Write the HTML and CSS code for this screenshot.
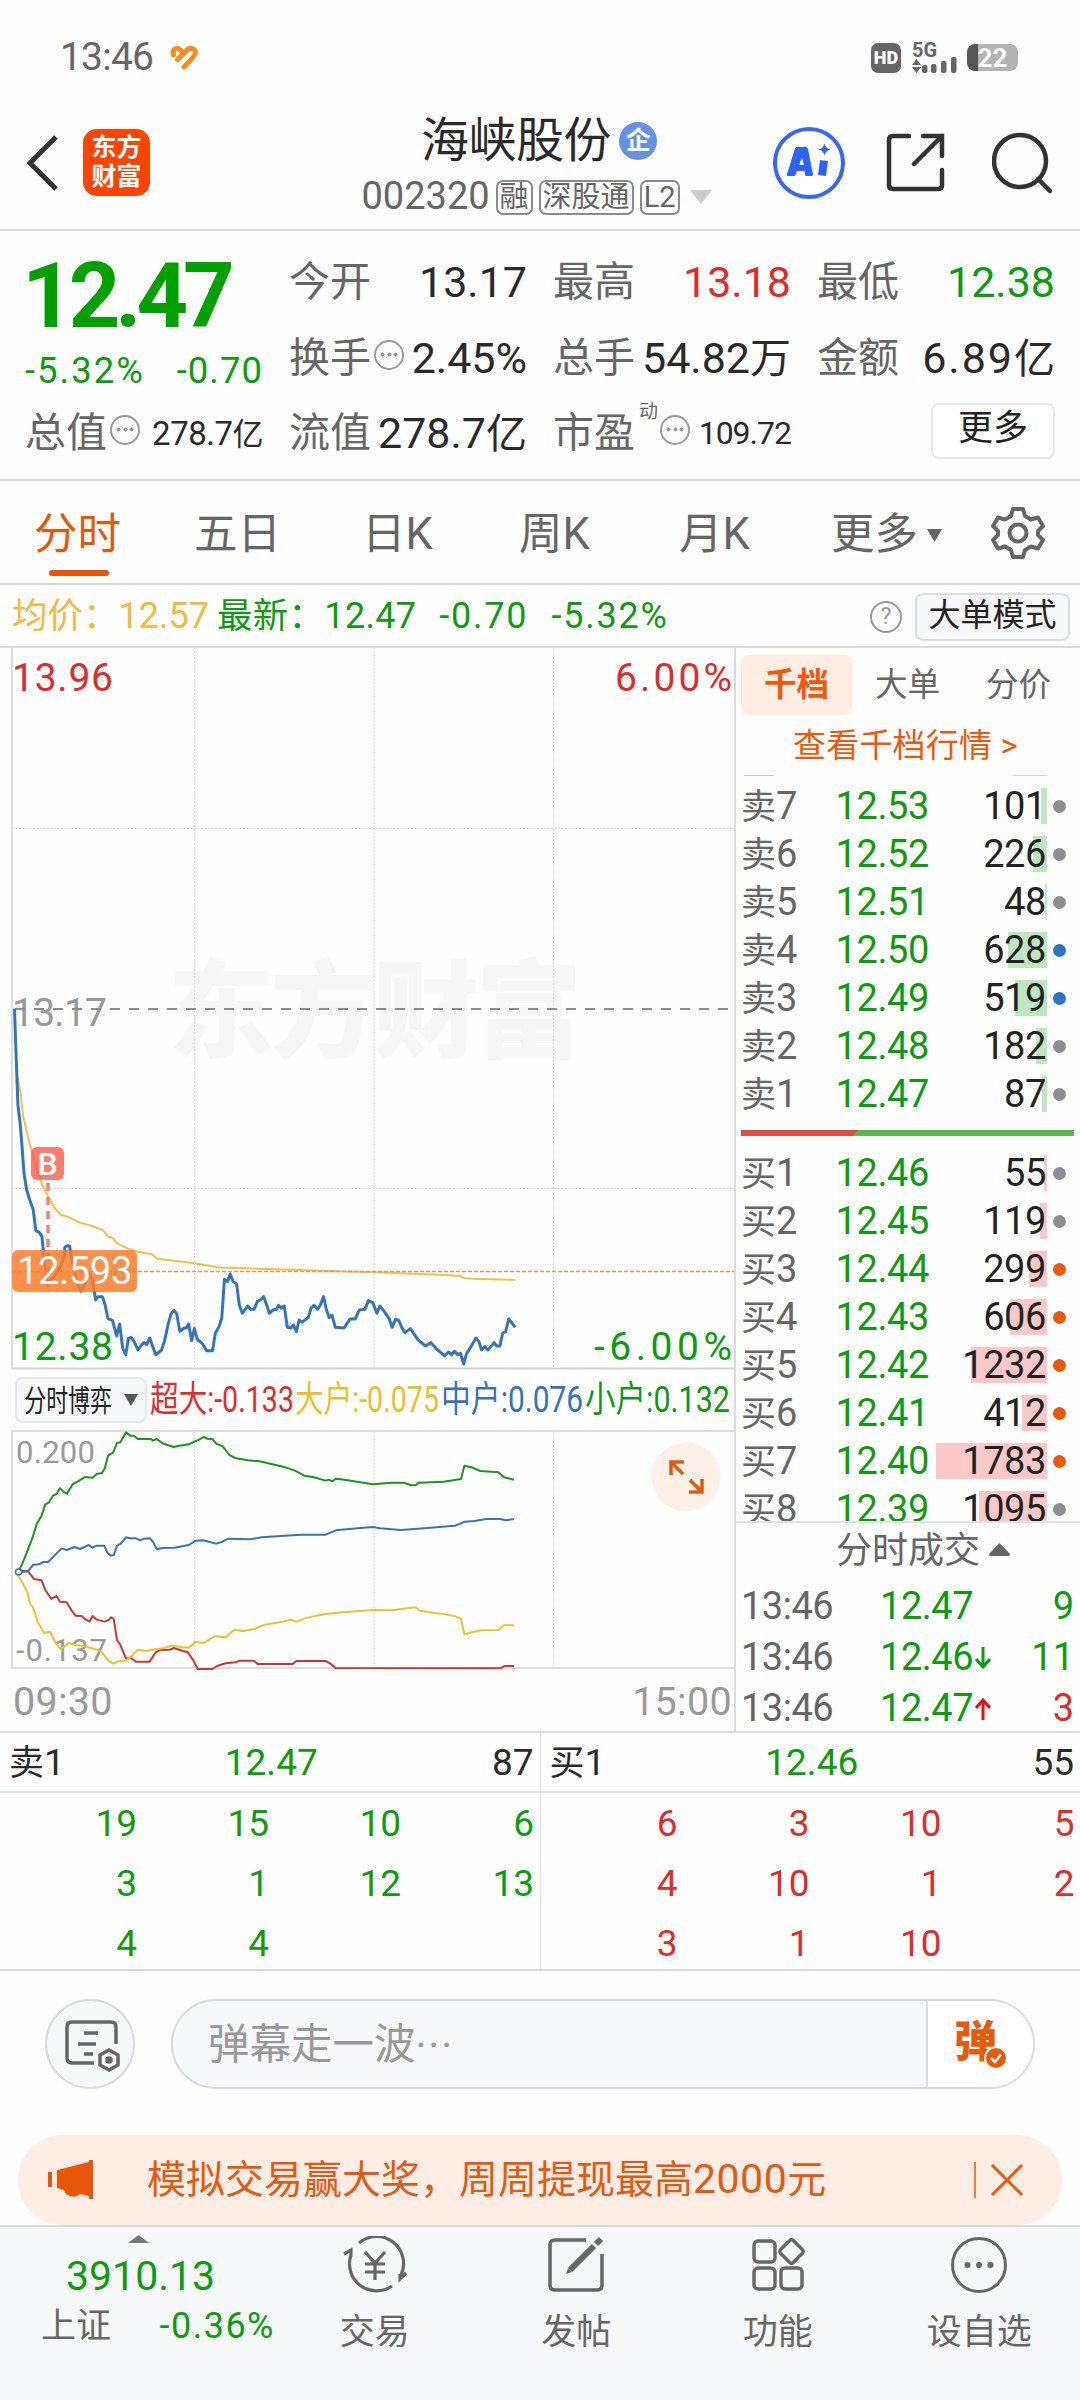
FILE: index.html
```html
<!DOCTYPE html>
<html lang="zh-CN">
<head>
    <meta charset="UTF-8">
    <meta name="viewport" content="width=device-width, initial-scale=1.0">
    <title>海峡股份 002320</title>
    <link rel="stylesheet" href="styles.css">
</head>
<body>
    <div class="status-bar">
        <span class="time">13:46</span>
        <svg class="heart" width="28" height="25" viewBox="0 0 28 25" fill="none" stroke="#ff8a1e" stroke-width="5" stroke-linecap="round">
            <path d="M3.500 10C2 5 6 2 9 4L14 8M7.500 14.500L16 6C20 1 27 4 25 9C24 12 18 18 14 22"/>
        </svg>
        <div class="status-icons">
            <span class="hd">HD</span>
            <svg width="46" height="32" viewBox="0 0 46 32" fill="#666">
                <text class="net" x="0" y="15" textLength="25" lengthAdjust="spacingAndGlyphs">5G</text>
                <path d="M0 23l4.500-6 4.500 6zM0 25l4.500 6 4.500-6z"/>
                <rect x="10" y="23" width="5.500" height="8" rx="2"/>
                <rect x="19" y="22" width="5.500" height="9" rx="2"/>
                <rect x="29" y="19" width="5.500" height="12" rx="2"/>
                <rect x="39" y="15" width="5.500" height="16" rx="2"/>
            </svg>
            <span class="battery">22</span>
        </div>
    </div>

    <header class="header">
        <svg class="back" width="32" height="56" viewBox="0 0 32 56" fill="none" stroke="#333" stroke-width="5">
            <path d="M30 2L4 28L30 54"/>
        </svg>
        <div class="logo">东方<br>财富</div>
        <div class="stock">
            <div class="stock-name">海峡股份<span class="corp">企</span></div>
            <div class="stock-code">
                <span>002320</span><span class="tag">融</span><span class="tag">深股通</span><span class="tag">L2</span>
                <svg width="22" height="14" viewBox="0 0 22 14"><path d="M0 0h22L11 14z" fill="#ccc"/></svg>
            </div>
        </div>
        <svg class="ai" width="72" height="72" viewBox="0 0 72 72">
            <circle cx="36" cy="36" r="34" fill="#fff" stroke="#3a66f5" stroke-width="4"/>
            <path d="M23.500 20H33Q34.500 20 35 22L40 47Q40 49 38.500 49H33Q32 49 32 47L31.500 44H24L22.500 48Q22 49 21 49H15Q13 49 14 47L22 21.500Q22.500 20 23.500 20ZM29 31L26 38H31Z" fill="#2f62f6"/>
            <path d="M51 33.500L49 48.500" stroke="#2f62f6" stroke-width="8"/>
            <path d="M51.500 16.500q1 5 6 6q-5 1-6 6q-1-5-6-6q5-1 6-6z" fill="#2f62f6"/>
        </svg>
        <svg class="share" width="60" height="60" viewBox="0 0 60 60" fill="none" stroke="#333" stroke-width="4.500" stroke-linecap="round">
            <path d="M23 3H7Q3 3 3 7V52Q3 56 7 56H52Q56 56 56 52V37M37 3H56V23M56 3L28 31"/>
        </svg>
        <svg class="search" width="60" height="62" viewBox="0 0 60 62" fill="none" stroke="#333" stroke-width="4.500" stroke-linecap="round">
            <circle cx="28" cy="29" r="26"/><path d="M46 47L58 59"/>
        </svg>
    </header>

    <section class="quote">
        <div class="price">12.47</div>
        <div class="metric"><label>今开</label><b>13.17</b></div>
        <div class="metric"><label>最高</label><b class="red">13.18</b></div>
        <div class="metric"><label>最低</label><b class="green">12.38</b></div>

        <div class="change"><span>-5.32%</span><span>-0.70</span></div>
        <div class="metric"><label>换手</label><i class="dots"></i><b>2.45%</b></div>
        <div class="metric"><label>总手</label><b>54.82<em>万</em></b></div>
        <div class="metric wide"><label>金额</label><b>6.89<em>亿</em></b></div>

        <div class="metric small"><label>总值</label><i class="dots"></i><b>278.7<em>亿</em></b></div>
        <div class="metric"><label>流值</label><b>278.7<em>亿</em></b></div>
        <div class="metric small"><label>市盈</label><sup>动</sup><i class="dots"></i><b class="ratio-value">109.72</b></div>
        <button class="more-btn">更多</button>
    </section>

    <nav class="tabs">
        <a class="active">分时</a>
        <a>五日</a>
        <a>日K</a>
        <a>周K</a>
        <a>月K</a>
        <a class="tab-more">更多<svg width="15" height="13" viewBox="0 0 15 13"><path d="M0 0h15L7.500 13z" fill="#666"/></svg></a>
        <svg class="gear" width="54" height="54" viewBox="0 0 54 54" fill="none" stroke="#666" stroke-width="4">
            <path d="M22 3H32L34 10L40 13.500L47 11.500L52 20L47 25V29L52 34L47 42.500L40 40.500L34 44L32 51H22L20 44L14 40.500L7 42.500L2 34L7 29V25L2 20L7 11.500L14 13.500L20 10Z" stroke-linejoin="round"/>
            <circle cx="27" cy="27" r="8.500"/>
        </svg>
    </nav>

    <div class="summary">
        <span class="avg"><em>均价：</em>12.57</span>
        <span class="last"><em>最新：</em>12.47</span>
        <span class="diff">-0.70</span>
        <span class="diff">-5.32%</span>
        <span class="help">?</span>
        <button class="mode-btn">大单模式</button>
    </div>

    <main class="main">
        <div class="charts">
            <div class="price-chart">
                <svg class="plot" width="735" height="723" viewBox="0 0 735 723" fill="none">
                    <text class="watermark" x="168" y="402" textLength="414">东方财富</text>
                    <path d="M12 181.500H734M12 541.500H734M194.500 0V722M374 0V722M553.500 0V722" stroke="#d8d8d8" stroke-dasharray="2 1.500"/>
                    <path d="M12 0V722" stroke="#ddd" stroke-width="2"/>
                    <path d="M12 721.500H734" stroke="#d4d4d4" stroke-width="2"/>
                    <text class="axis" x="12" y="379" fill="#999" textLength="95">13.17</text>
                    <path d="M15 362H733" stroke="#8c8c8c" stroke-width="2" stroke-dasharray="10 9"/>
                    <g transform="translate(0 353) scale(.338 .3333)" stroke-linejoin="round">
                        <polyline vector-effect="non-scaling-stroke" stroke="#f0bf4c" stroke-width="2" points="53,235 61,280 68,345 80,400 92,445 110,510 125,555 143,590 160,622 180,645 200,650 235,668 265,676 304,690 320,710 335,715 345,729 378,746 410,756 450,763 465,776 520,783 575,790 655,803 760,806 860,809 1000,814 1150,818 1300,824 1360,828 1375,835 1420,837 1524,840"/>
                        <polyline vector-effect="non-scaling-stroke" stroke="#3574b8" stroke-width="3" points="43,26 46,120 53,315 60,375 66,450 71,520 79,570 88,600 98,628 106,692 116,697 124,710 130,770 140,850 160,830 178,800 190,770 192,742 198,737 206,738 210,765 218,800 228,850 240,874 252,850 262,820 274,842 283,900 290,890 303,890 311,915 319,955 333,962 345,1008 354,972 363,1045 372,1064 380,1015 388,1012 397,1025 408,1050 420,1034 426,1028 434,1034 443,1014 452,1040 461,1064 478,1050 487,1022 497,975 506,942 515,931 523,942 532,994 545,984 551,984 558,972 567,1022 575,986 584,1018 598,1030 611,1052 629,1052 637,1000 648,980 656,955 664,838 673,845 681,822 690,845 700,852 708,915 717,940 733,918 741,928 752,928 761,905 770,900 780,890 789,915 797,940 808,930 818,928 824,916 832,925 841,918 850,982 861,984 868,975 877,995 885,960 894,966 912,953 920,925 929,916 939,928 948,915 957,890 966,930 974,953 982,945 992,982 1018,984 1027,970 1036,957 1051,957 1063,930 1080,928 1090,902 1103,908 1115,940 1124,918 1137,935 1151,955 1160,982 1171,957 1180,962 1190,985 1198,998 1214,986 1237,1020 1259,1038 1275,1028 1290,1045 1315,1068 1328,1056 1336,1064 1345,1054 1354,1064 1362,1060 1372,1092 1380,1062 1397,1034 1408,1014 1417,1025 1425,1050 1434,1040 1444,1050 1462,1028 1469,1038 1479,1038 1487,1000 1496,995 1505,957 1512,965 1524,982"/>
                    </g>
                    <path d="M12 624.500H734" stroke="#d89a66" stroke-width="1.500" stroke-dasharray="4 2"/>
                    <path d="M48 536V640" stroke="#ee8577" stroke-width="3.500" stroke-dasharray="8 6"/>
                    <text class="axis" x="12" y="44" fill="#dd2c2c" textLength="101">13.96</text>
                    <text class="axis" x="615" y="44" fill="#dd2c2c" textLength="117">6.00%</text>
                    <text class="axis" x="12" y="713" fill="#0f9a10" textLength="101">12.38</text>
                    <text class="axis" x="594" y="713" fill="#0f9a10" textLength="138">-6.00%</text>
                </svg>
                <span class="buy-mark">B</span>
                <span class="price-mark">12.593</span>
            </div>

            <div class="legend">
                <button class="game-btn"><span>分时博弈</span><svg width="14" height="12" viewBox="0 0 14 12"><path d="M0 0h14L7 12z" fill="#555"/></svg></button>
                <svg class="legend-text" width="584" height="62" viewBox="0 0 584 62">
                    <text x="0" y="43" fill="#d92f2f" textLength="144" lengthAdjust="spacingAndGlyphs">超大:-0.133</text>
                    <text x="145" y="43" fill="#eac02a" textLength="144" lengthAdjust="spacingAndGlyphs">大户:-0.075</text>
                    <text x="291" y="43" fill="#3973b0" textLength="142" lengthAdjust="spacingAndGlyphs">中户:0.076</text>
                    <text x="435" y="43" fill="#149514" textLength="145" lengthAdjust="spacingAndGlyphs">小户:0.132</text>
                </svg>
            </div>

            <div class="flow-chart">
                <svg class="plot" width="735" height="240" viewBox="0 0 735 240" fill="none">
                    <path d="M194.500 1V238M374 1V238M553.500 1V238" stroke="#d8d8d8" stroke-dasharray="2 1.500"/>
                    <path d="M734 1H12V238H734" stroke="#ddd" stroke-width="2"/>
                    <text class="axis-small" x="16" y="33" textLength="79">0.200</text>
                    <text class="axis-small" x="16" y="231" textLength="91">-0.137</text>
                    <g transform="translate(0 -71) scale(.4719 .3333)" stroke-width="2" stroke-linejoin="round">
                        <polyline vector-effect="non-scaling-stroke" stroke="#cf3434" points="38,632 60,638 72,660 88,664 96,693 105,712 109,720 120,711 127,728 141,730 152,755 160,770 173,771 182,782 190,788 196,771 205,782 221,788 228,785 236,775 241,780 248,843 254,855 267,898 278,898 288,908 317,908 330,880 340,873 360,872 368,867 388,876 398,880 410,905 419,930 450,930 460,921 478,913 500,910 508,905 538,905 546,915 620,915 628,906 690,906 700,914 711,927 1060,928 1070,921 1089,921"/>
                        <polyline vector-effect="non-scaling-stroke" stroke="#e9c22e" points="38,648 47,670 58,700 64,735 70,745 80,790 94,822 106,818 117,850 128,870 140,860 145,852 160,858 180,862 205,872 216,880 230,906 240,914 250,907 267,905 280,890 292,872 310,876 330,871 345,868 365,860 385,865 400,866 415,849 432,852 455,832 478,835 497,812 515,816 540,810 560,797 600,788 615,782 628,788 650,776 690,765 715,761 790,753 830,754 880,745 890,755 920,762 935,764 965,772 977,780 984,826 1000,820 1020,814 1056,813 1068,799 1089,799"/>
                        <polyline vector-effect="non-scaling-stroke" stroke="#3973b3" points="38,645 48,638 60,636 70,618 82,616 92,609 102,609 112,595 130,569 142,573 158,564 170,570 188,558 196,566 205,560 221,560 228,582 235,590 241,588 248,560 255,555 267,535 275,538 288,538 297,544 305,539 318,538 325,550 332,571 345,567 370,566 400,558 415,545 430,544 458,554 470,549 484,539 530,541 555,535 620,529 640,527 690,527 712,514 740,510 790,504 805,508 850,513 900,508 950,502 965,500 985,488 1005,486 1030,480 1060,480 1072,484 1089,480"/>
                        <polyline vector-effect="non-scaling-stroke" stroke="#1c931c" points="38,640 47,615 57,580 68,540 78,495 88,470 96,436 104,430 112,410 120,405 127,388 134,398 142,404 154,376 168,365 180,354 196,356 205,345 216,342 222,328 229,290 240,280 248,252 255,250 267,220 276,230 284,230 292,240 320,240 324,245 332,240 345,253 355,258 368,264 380,260 400,256 412,248 422,242 432,234 441,240 450,240 458,254 472,262 486,288 500,298 525,304 550,307 600,323 625,335 645,350 665,355 690,365 697,362 704,367 712,359 730,362 790,376 830,371 855,371 870,378 880,379 888,371 940,368 977,360 984,320 1000,325 1018,336 1056,340 1068,355 1089,362"/>
                    </g>
                    <circle cx="18.500" cy="142" r="3" fill="#fff" stroke="#3973b3" stroke-width="1.500"/>
                </svg>
                <svg class="expand" width="70" height="70" viewBox="0 0 70 70">
                    <circle cx="35" cy="35" r="34.500" fill="#fdf0e8"/>
                    <path d="M33 20H20V33M20 20L32 32M51 37V50H38M51 50L39 38" fill="none" stroke="#dc5c12" stroke-width="3.500"/>
                </svg>
            </div>

            <div class="time-axis"><span>09:30</span><span>15:00</span></div>
        </div>

        <aside class="book">
            <div class="book-tabs"><a class="active">千档</a><a>大单</a><a>分价</a></div>
            <a class="book-link">查看千档行情 &gt;</a>
            <div class="levels">
                <i class="cut-label"></i><i class="cut-bar"></i>
                <div class="level sell"><label><em>卖</em>7</label><span>12.53</span><b><u style="width:6px"></u>101</b><i></i></div>
                <div class="level sell"><label><em>卖</em>6</label><span>12.52</span><b><u style="width:14px"></u>226</b><i></i></div>
                <div class="level sell"><label><em>卖</em>5</label><span>12.51</span><b><u style="width:2px"></u>48</b><i></i></div>
                <div class="level sell"><label><em>卖</em>4</label><span>12.50</span><b><u style="width:39px"></u>628</b><i class="blue-dot"></i></div>
                <div class="level sell"><label><em>卖</em>3</label><span>12.49</span><b><u style="width:32px"></u>519</b><i class="blue-dot"></i></div>
                <div class="level sell"><label><em>卖</em>2</label><span>12.48</span><b><u style="width:11px"></u>182</b><i></i></div>
                <div class="level sell"><label><em>卖</em>1</label><span>12.47</span><b><u style="width:5px"></u>87</b><i></i></div>
                <div class="ratio"></div>
                <div class="level buy"><label><em>买</em>1</label><span>12.46</span><b><u style="width:3px"></u>55</b><i></i></div>
                <div class="level buy"><label><em>买</em>2</label><span>12.45</span><b><u style="width:7px"></u>119</b><i></i></div>
                <div class="level buy"><label><em>买</em>3</label><span>12.44</span><b><u style="width:18px"></u>299</b><i class="orange-dot"></i></div>
                <div class="level buy"><label><em>买</em>4</label><span>12.43</span><b><u style="width:37px"></u>606</b><i class="orange-dot"></i></div>
                <div class="level buy"><label><em>买</em>5</label><span>12.42</span><b><u style="width:76px"></u>1232</b><i class="orange-dot"></i></div>
                <div class="level buy"><label><em>买</em>6</label><span>12.41</span><b><u style="width:25px"></u>412</b><i class="orange-dot"></i></div>
                <div class="level buy"><label><em>买</em>7</label><span>12.40</span><b><u style="width:111px"></u>1783</b><i class="orange-dot"></i></div>
                <div class="level buy"><label><em>买</em>8</label><span>12.39</span><b><u style="width:68px"></u>1095</b><i></i></div>
            </div>
            <div class="deals-title">分时成交<svg width="21" height="13" viewBox="0 0 21 13"><path d="M10.500 0L21 11Q21 13 19 13H2Q0 13 0 11z" fill="#666"/></svg></div>
            <div class="deal"><span>13:46</span><b>12.47</b><i></i><em class="green">9</em></div>
            <div class="deal"><span>13:46</span><b>12.46</b><i><svg width="16" height="22" viewBox="0 0 16 22" fill="none" stroke="#0f9a10" stroke-width="3"><path d="M8 0V20M1 12L8 20L15 12"/></svg></i><em class="green">11</em></div>
            <div class="deal"><span>13:46</span><b>12.47</b><i><svg width="16" height="22" viewBox="0 0 16 22" fill="none" stroke="#dd1515" stroke-width="3"><path d="M8 22V2M1 10L8 2L15 10"/></svg></i><em class="red">3</em></div>
        </aside>
    </main>

    <section class="queues">
        <div class="queue">
            <div class="queue-head"><span><em>卖</em>1</span><b>12.47</b><span>87</span></div>
            <div class="queue-grid green">
                <span>19</span><span>15</span><span>10</span><span>6</span>
                <span>3</span><span>1</span><span>12</span><span>13</span>
                <span>4</span><span>4</span>
            </div>
        </div>
        <div class="queue">
            <div class="queue-head"><span><em>买</em>1</span><b>12.46</b><span>55</span></div>
            <div class="queue-grid red">
                <span>6</span><span>3</span><span>10</span><span>5</span>
                <span>4</span><span>10</span><span>1</span><span>2</span>
                <span>3</span><span>1</span><span>10</span>
            </div>
        </div>
    </section>

    <div class="comment">
        <div class="comment-set">
            <svg width="56" height="52" viewBox="0 0 56 52" fill="none" stroke="#666" stroke-width="3.500">
                <path d="M29 43H7Q2 43 2 38V7Q2 2 7 2H46Q51 2 51 7V24M19 13H33M13 24H31M19 34H28"/>
                <path d="M44 30L53 35V45L44 50L35 45V35Z"/><circle cx="44" cy="40" r="2" fill="#666"/>
            </svg>
        </div>
        <div class="comment-box">
            <span class="placeholder">弹幕走一波<i>···</i></span>
            <div class="danmu">弹
                <svg width="24" height="24" viewBox="0 0 24 24"><circle cx="12" cy="12" r="11" fill="#e8590c" stroke="#fff" stroke-width="2"/><path d="M7 12L11 16L17 8.500" fill="none" stroke="#fff" stroke-width="2.500"/></svg>
            </div>
        </div>
    </div>

    <div class="banner">
        <svg width="46" height="40" viewBox="0 0 46 40" fill="#e85608"><path d="M0 12h4v15H0zM9 10L41 2V0H45V39H41V36L32 34Q28 38 22 36Q17 35 16 30L9 28z"/></svg>
        <span class="banner-text">模拟交易赢大奖，周周提现最高<em>2000</em>元</span>
        <svg class="banner-close" width="50" height="38" viewBox="0 0 50 38" fill="none" stroke="#e8590c"><path d="M1 1V37" stroke-width="1.500"/><path d="M18 4L48 34M48 4L18 34" stroke-width="3"/></svg>
    </div>

    <footer class="bottom-nav">
        <div class="index">
            <svg width="21" height="8" viewBox="0 0 21 8"><path d="M10.500 0L21 8H0z" fill="#77777c"/></svg>
            <div class="index-value">3910.13</div>
            <div class="index-row"><span>上证</span><b>-0.36%</b></div>
        </div>
        <div class="nav-item">
            <svg width="66" height="58" viewBox="0 0 66 58" fill="none" stroke="#666" stroke-width="3.200">
                <path d="M17 7A27 27 0 0 1 59 39M64 37L58 43V38M2 18L9 14V19A27 27 0 0 0 50 50"/>
                <path d="M23 16L33 27L43 16M23 28H43M23 36H43M33 27V44"/>
            </svg>
            <span>交易</span>
        </div>
        <div class="nav-item">
            <svg width="56" height="58" viewBox="0 0 56 58" fill="none" stroke="#666" stroke-width="3.500">
                <path d="M38 4H7Q2 4 2 9V49Q2 54 7 54H49Q54 54 54 49V18"/>
                <path d="M22 34L46 10" stroke-width="6"/><path d="M48 8L53 3" stroke-width="6"/><path d="M20 32L24 36L18 38z" fill="#666" stroke="none"/>
            </svg>
            <span>发帖</span>
        </div>
        <div class="nav-item">
            <svg width="54" height="58" viewBox="0 0 54 58" fill="none" stroke="#666" stroke-width="3.400">
                <rect x="3" y="5" width="21" height="21" rx="4"/><rect x="3" y="32" width="21" height="21" rx="4"/><rect x="30" y="32" width="21" height="21" rx="4"/>
                <rect x="31.500" y="6.500" width="18" height="18" rx="2.500" transform="rotate(45 40.500 15.500)"/>
            </svg>
            <span>功能</span>
        </div>
        <div class="nav-item">
            <svg width="58" height="58" viewBox="0 0 58 58" fill="#666">
                <circle cx="29" cy="29" r="26.500" fill="none" stroke="#666" stroke-width="3"/>
                <circle cx="17.500" cy="29" r="3"/><circle cx="29" cy="29" r="3"/><circle cx="40.500" cy="29" r="3"/>
            </svg>
            <span>设自选</span>
        </div>
    </footer>
</body>
</html>
```
FILE: styles.css
```css
* {
    box-sizing: border-box;
}

body {
    margin: 0;
    width: 1080px;
    height: 2400px;
    overflow: hidden;
    background-color: #fefefe;
    color: #2a2a2a;
    font-family: Roboto, "Noto Sans CJK SC", sans-serif;
    font-size: 37px;
    line-height: 1.2;
}

svg {
    display: block;
    flex: none;
}

b, em, i {
    font-weight: normal;
    font-style: normal;
}

button {
    padding: 0;
    font-family: inherit;
    color: #222;
}

.red {
    color: #dd2c2c;
}

.green {
    color: #0f9a10;
}

/* status bar */
.status-bar {
    display: flex;
    align-items: center;
    height: 96px;
    padding: 19px 62px 0 60px;
    color: #666;
}

.time {
    font-size: 39px;
    width: 110px;
    letter-spacing: -0.8px;
}

.status-icons {
    display: flex;
    align-items: center;
    margin-left: auto;
    gap: 11px;
}

.hd {
    width: 30px;
    height: 30px;
    border-radius: 7px;
    background-color: #666;
    color: #fff;
    font-size: 18px;
    font-weight: 900;
    line-height: 30px;
    text-align: center;
}

.net {
    font-size: 20px;
    font-weight: bold;
}

.battery {
    width: 51px;
    height: 27px;
    margin-left: -2px;
    border-radius: 8px;
    background: linear-gradient(to right, #555 11px, #b3b3b3 11px);
    box-shadow: 3px 0 0 -7px #b3b3b3;
    color: #fff;
    font-size: 26px;
    font-weight: bold;
    line-height: 28px;
    text-align: center;
}

/* header */
.header {
    display: flex;
    align-items: center;
    height: 133px;
    padding: 0 28px 0 26px;
}

.logo {
    width: 67px;
    height: 67px;
    margin-left: 25px;
    padding-top: 4px;
    border-radius: 14px;
    background-color: #fd4402;
    color: #fff;
    font-size: 25px;
    font-weight: bold;
    line-height: 29px;
    text-align: center;
}

.stock {
    width: 380px;
    margin-left: 200px;
    padding-top: 9px;
}

.stock-name {
    display: flex;
    align-items: center;
    justify-content: center;
    height: 60px;
    padding-right: 2px;
    font-size: 48px;
    letter-spacing: -0.500px;
}

.corp {
    width: 38px;
    height: 38px;
    margin-left: 8px;
    border-radius: 50%;
    background-color: #6391e6;
    color: #fff;
    font-size: 25px;
    font-weight: bold;
    line-height: 37px;
    text-align: center;
}

.stock-code {
    display: flex;
    align-items: center;
    justify-content: center;
    height: 52px;
    padding-right: 7px;
    gap: 6px;
    color: #666;
    font-size: 38px;
}

.stock-code svg {
    margin-left: 4px;
}

.tag {
    height: 35px;
    padding: 0 2px;
    border: 2px solid #8a8a8a;
    border-radius: 7px;
    font-size: 29px;
    line-height: 31px;
}

.ai {
    margin-left: 43px;
}

.share {
    margin-left: 41px;
}

.search {
    margin-left: auto;
}

/* quote */
.quote {
    display: grid;
    grid-template-columns: repeat(4, 238px);
    grid-template-rows: 76px 75px 75px;
    column-gap: 26px;
    height: 252px;
    padding: 14px 25px 0;
    border-top: 2px solid #dadada;
    border-bottom: 2px solid #dadada;
}

.price {
    margin-left: -3px;
    padding-top: 5px;
    color: #00a000;
    font-size: 90px;
    font-weight: bold;
    letter-spacing: -5px;
    line-height: 94px;
}

.change {
    display: flex;
    justify-content: space-between;
    padding-top: 28px;
    color: #0f9a10;
    font-size: 36.500px;
    letter-spacing: 2px;
}

.change span:last-child {
    letter-spacing: 1px;
}

.metric {
    display: flex;
    align-items: center;
}

.metric label {
    color: #666;
    font-size: 41px;
}

.metric b {
    margin-left: auto;
    font-size: 43px;
}

.metric em {
    font-size: 41px;
}

.metric.wide b {
    letter-spacing: 2px;
    margin-right: -2px;
}

.metric.small b {
    font-size: 33px;
    letter-spacing: -0.500px;
}

.metric.small em {
    font-size: 31px;
}

.metric.small .ratio-value {
    font-size: 32px;
    letter-spacing: -1px;
}

.metric sup {
    align-self: flex-start;
    margin: 5px 0 0 4px;
    font-size: 19px;
    line-height: 1.2;
    color: #666;
}

.dots {
    width: 30px;
    height: 30px;
    margin: -8px 0 0 3px;
    border: 2px solid #999;
    border-radius: 50%;
    background: radial-gradient(circle, #999 1.800px, transparent 2.200px) center / 7px 7px no-repeat,
        radial-gradient(circle, #999 1.800px, transparent 2.200px) 3px center / 7px 7px no-repeat,
        radial-gradient(circle, #999 1.800px, transparent 2.200px) 16px center / 7px 7px no-repeat;
}

.metric.small sup + .dots {
    margin-left: 2px;
}

.more-btn {
    justify-self: end;
    align-self: center;
    width: 124px;
    height: 56px;
    margin-top: -6px;
    border: 2px solid #e8e8e8;
    border-radius: 8px;
    background-color: #fff;
    font-size: 35px;
    line-height: 46px;
    padding-bottom: 4px;
}

/* period tabs */
.tabs {
    display: grid;
    grid-template-columns: 160px 168px 157px 160px 152px 1fr 54px;
    align-items: center;
    height: 102px;
    padding: 2px 35px 0 34px;
    color: #666;
    font-size: 43.500px;
}

.tabs a {
    position: relative;
    padding-top: 4px;
}

.tabs .active {
    color: #e05a0e;
}

.tabs .active::after {
    content: "";
    position: absolute;
    left: 15px;
    bottom: -15px;
    width: 60px;
    height: 6px;
    border-radius: 3px;
    background-color: #e85608;
}

.tabs .tab-more {
    display: flex;
    align-items: center;
    gap: 9px;
}

/* summary line */
.summary {
    display: flex;
    align-items: center;
    height: 65px;
    padding: 2px 10px 0 12px;
    border-top: 2px solid #dadada;
    border-bottom: 2px solid #dadada;
    color: #0f9a10;
    font-size: 36px;
}

.summary em {
    font-size: 35.500px;
}

.summary .avg {
    color: #f0b942;
}

.last {
    margin-left: 8px;
    letter-spacing: 0.300px;
}

.diff {
    margin-left: 23px;
    letter-spacing: 1.800px;
}

.help {
    width: 32px;
    height: 32px;
    margin-left: auto;
    margin-right: 13px;
    border: 2.500px solid #999;
    border-radius: 50%;
    color: #999;
    font-size: 23px;
    line-height: 28px;
    text-align: center;
}

.mode-btn {
    width: 155px;
    height: 48px;
    padding-bottom: 4px;
    border: 2px solid #dcdde0;
    border-radius: 8px;
    background-color: #f6f7f9;
    font-size: 32px;
    line-height: 40px;
}

/* charts */
.main {
    display: flex;
    height: 1083px;
}

.charts {
    width: 736px;
    border-right: 2px solid #dadada;
}

.price-chart {
    position: relative;
    height: 722px;
}

.price-chart .plot {
    margin-top: -1px;
}

.watermark {
    fill: #f6f6f6;
    font-size: 106px;
    font-weight: 900;
}

.axis {
    font-size: 39px;
}

.axis-small {
    fill: #999;
    font-size: 31px;
}

.buy-mark {
    position: absolute;
    left: 31px;
    top: 500px;
    width: 33px;
    height: 33px;
    border-radius: 6px;
    background-color: rgba(250, 92, 75, 0.800);
    color: #fff;
    font-size: 32px;
    font-weight: 500;
    line-height: 34px;
    text-align: center;
}

.price-mark {
    position: absolute;
    left: 12px;
    top: 603px;
    width: 125px;
    height: 42px;
    border-radius: 6px;
    background-color: rgba(255, 123, 44, 0.850);
    color: #fff;
    font-size: 38px;
    letter-spacing: -0.3px;
    line-height: 43px;
    text-align: center;
}

.legend {
    display: flex;
    align-items: center;
    height: 61px;
    padding-left: 15px;
}

.game-btn {
    display: flex;
    align-items: center;
    width: 133px;
    height: 46px;
    margin-right: 3px;
    border: 2px solid #e6e7ea;
    border-radius: 8px;
    background-color: #f6f7f9;
    font-size: 30px;
    white-space: nowrap;
}

.game-btn span {
    width: 98px;
    padding-left: 10px;
    padding-bottom: 3px;
    transform: scaleX(0.730);
    transform-origin: 0 50%;
}

.game-btn svg {
    margin-left: 9px;
}

.legend-text {
    font-size: 36px;
}

.flow-chart {
    position: relative;
    height: 240px;
}

.expand {
    position: absolute;
    right: 13px;
    top: 12px;
}

.time-axis {
    display: flex;
    justify-content: space-between;
    padding: 8px 2px 0 13px;
    color: #999;
    font-size: 39.500px;
    letter-spacing: 0.300px;
}

/* order book */
.book {
    width: 344px;
    color: #666;
}

.book-tabs {
    display: flex;
    height: 67px;
    padding: 7px 0 0 5px;
    font-size: 32.500px;
    line-height: 61px;
    text-align: center;
}

.book-tabs a {
    width: 111px;
}

.book-tabs .active {
    height: 60px;
    border-radius: 8px;
    background-color: #ffede4;
    color: #f4570a;
    font-weight: bold;
}

.book-link {
    display: block;
    height: 60px;
    padding-left: 57px;
    color: #ea5a0e;
    font-size: 33px;
    line-height: 62px;
    letter-spacing: 0.200px;
}

.levels {
    position: relative;
    height: 748px;
    padding-top: 7px;
    border-bottom: 2px solid #e2e2e2;
    overflow: hidden;
}

.cut-label, .cut-bar {
    position: absolute;
    top: 0;
    left: 8px;
    width: 30px;
    height: 1px;
    background-color: #c9c9c9;
}

.cut-bar {
    left: 277px;
    width: 34px;
    background-color: #bfe6bf;
}

.level {
    display: grid;
    grid-template-columns: 70px 118px 118px 19px;
    align-items: center;
    height: 48px;
    padding-left: 5px;
    font-size: 38px;
}

.level em, .queue-head em {
    font-size: 35px;
}

.level label {
    padding-top: 2px;
}

.level span, .level b {
    text-align: right;
    letter-spacing: -0.400px;
}

.level span {
    padding-top: 2px;
    color: #0f9a10;
}

.level b {
    position: relative;
    z-index: 0;
    height: 36px;
    padding-right: 1px;
    color: #222;
    line-height: 37px;
}

.level u {
    position: absolute;
    z-index: -1;
    right: 0;
    top: 0;
    height: 36px;
    background-color: #bfe6bf;
}

.buy u {
    background-color: #fbc8c8;
}

.level i {
    justify-self: end;
    width: 13px;
    height: 13px;
    border-radius: 50%;
    background-color: #8e8d93;
}

.level .blue-dot {
    background-color: #2f73c4;
}

.level .orange-dot {
    background-color: #ea5a08;
}

.ratio {
    height: 6px;
    margin: 12px 6px 13px 5px;
    background: linear-gradient(135deg, #e04d4d 83px, #5cb84c 83px);
}

.deals-title {
    display: flex;
    align-items: center;
    height: 58px;
    padding-left: 100px;
    gap: 9px;
    font-size: 36px;
}

.deals-title svg {
    margin-top: -6px;
}

.deal {
    display: grid;
    grid-template-columns: 104px 128px 28px 1fr;
    align-items: center;
    height: 51px;
    padding: 0 6px 0 5px;
    font-size: 38px;
}

.deal span, .deal b {
    letter-spacing: -0.500px;
}

.deal b {
    color: #0f9a10;
    text-align: right;
}

.deal i {
    padding-left: 2px;
}

.deal em {
    text-align: right;
}

/* queues */
.queues {
    display: flex;
    height: 240px;
    border-top: 2px solid #dadada;
    border-bottom: 2px solid #dadada;
}

.queue {
    width: 540px;
}

.queue:first-child {
    width: 541px;
    border-right: 1px solid #e2e2e2;
}

.queue-head {
    display: grid;
    grid-template-columns: 1fr auto 1fr;
    align-items: center;
    height: 60px;
    padding: 2px 6px 0 9px;
    border-bottom: 2px solid #e0e3e3;
}

.queue-head b {
    color: #0f9a10;
}

.queue-head span:last-child {
    text-align: right;
}

.queue-grid {
    display: grid;
    grid-template-columns: 137px 132px 132px 133px;
    grid-auto-rows: 60px;
    align-items: center;
    padding-top: 1px;
    text-align: right;
}

/* comment input */
.comment {
    display: flex;
    height: 164px;
    padding: 28px 45px 0;
    gap: 36px;
}

.comment-set {
    display: flex;
    width: 90px;
    height: 90px;
    padding: 19px 0 0 18px;
    border: 2px solid #d9dade;
    border-radius: 50%;
    background-color: #f7f8fa;
}

.comment-box {
    display: flex;
    align-items: center;
    width: 864px;
    height: 90px;
    padding-left: 35px;
    border: 2px solid #d9dade;
    border-radius: 45px;
    background-color: #f7f8fa;
    overflow: hidden;
}

.placeholder {
    padding-top: 2px;
    color: #999;
    font-size: 41.500px;
}

.placeholder i {
    letter-spacing: 2px;
}

.danmu {
    position: relative;
    width: 107px;
    height: 90px;
    margin-left: auto;
    padding-left: 26px;
    border-left: 2px solid #d9dade;
    background-color: #fff;
    color: #e8590c;
    font-size: 43px;
    font-weight: 900;
    line-height: 86px;
}

.danmu svg {
    position: absolute;
    left: 56px;
    top: 47px;
}

/* banner */
.banner {
    display: flex;
    align-items: center;
    height: 90px;
    margin: 0 18px;
    padding: 0 38px 0 30px;
    border-radius: 45px;
    background-color: #fdede4;
    color: #e05a14;
    font-size: 39px;
}

.banner-text {
    margin-left: 53px;
    white-space: nowrap;
}

.banner em {
    font-size: 41px;
    letter-spacing: 0.500px;
}

.banner-close {
    margin-left: auto;
}

/* bottom nav */
.bottom-nav {
    display: flex;
    height: 178px;
    padding-left: 10px;
    border-top: 2px solid #dadada;
    background-color: #f7f8fa;
    color: #666;
    font-size: 35px;
}

.index {
    width: 264px;
}

.index svg {
    margin: 8px 0 0 118px;
}

.index-value {
    padding: 9px 0 0 56px;
    color: #0f9a10;
    font-size: 41px;
}

.index-row {
    display: flex;
    align-items: center;
    justify-content: space-between;
    width: 234px;
    margin: 4px 0 0 31px;
}

.index-row b {
    color: #0f9a10;
    font-size: 36px;
    letter-spacing: 1.500px;
}

.nav-item {
    display: flex;
    flex-direction: column;
    align-items: center;
    width: 201.500px;
    padding-top: 9px;
}

.nav-item span {
    margin-top: 18px;
}
```
